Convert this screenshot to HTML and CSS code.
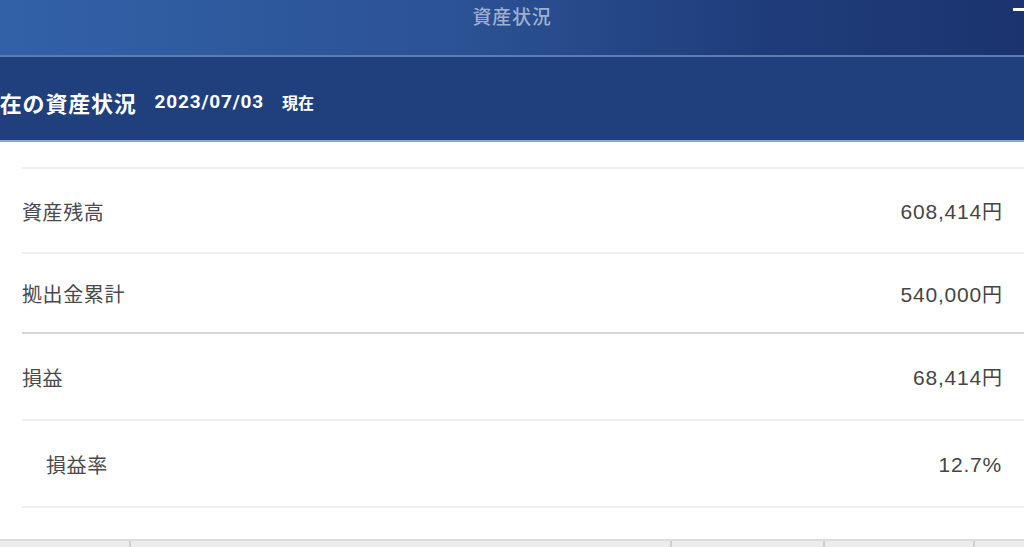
FILE: index.html
```html
<!DOCTYPE html>
<html lang="ja">
<head>
<meta charset="utf-8">
<title>資産状況</title>
<link rel="stylesheet" href="styles.css">
</head>
<body>
<div class="page">
  <header class="topbar">
    <h1 class="topbar-title">資産状況</h1>
    <span class="topbar-mark"></span>
  </header>
  <section class="summary-head">
    <h2 class="summary-title">現在の資産状況</h2>
    <span class="summary-date">2023/07/03</span>
    <span class="summary-now">現在</span>
  </section>
  <main class="content">
    <ul class="rows">
      <li class="row row-a"><span class="label">資産残高</span><span class="value">608,414<span class="yen">円</span></span></li>
      <li class="row row-b"><span class="label">拠出金累計</span><span class="value">540,000<span class="yen">円</span></span></li>
      <li class="row row-c"><span class="label">損益</span><span class="value">68,414<span class="yen">円</span></span></li>
      <li class="row row-d"><span class="label label-sub">損益率</span><span class="value">12.7%</span></li>
    </ul>
  </main>
  <footer class="tabbar">
    <div class="tab"></div>
    <div class="tab"></div>
    <div class="tab"></div>
    <div class="tab"></div>
    <div class="tab"></div>
  </footer>
</div>
</body>
</html>
```
FILE: styles.css
```css
* { box-sizing: border-box; }
html, body { margin: 0; padding: 0; }
body {
  width: 1024px;
  height: 547px;
  overflow: hidden;
  background: #ffffff;
  font-family: "Noto Sans CJK JP", "Noto Sans", sans-serif;
}
.page {
  display: flex;
  flex-direction: column;
  height: 547px;
  overflow: hidden;
}
.topbar {
  position: relative;
  height: 57px;
  flex: 0 0 57px;
  background: linear-gradient(90deg, #3261a8 0%, #2b5294 45%, #1f3c7a 75%, #1b346f 100%);
  border-bottom: 2px solid #5e7cb3;
  display: flex;
  justify-content: center;
}
.topbar-title {
  margin: 3px 0 0 0;
  font-size: 19px;
  line-height: 26px;
  font-weight: 500;
  color: #9fb0d0;
  letter-spacing: 0.8px;
}
.topbar-mark {
  position: absolute;
  right: 0;
  top: 8px;
  width: 11px;
  height: 3px;
  background: #ffffff;
}
.summary-head {
  flex: 0 0 85px;
  height: 85px;
  background: #1f3f7d;
  border-bottom: 2px solid #8ea6d6;
  display: flex;
  align-items: center;
  padding-top: 6px;
  color: #ffffff;
}
.summary-title {
  margin: 0 0 0 -23px;
  font-size: 22px;
  font-weight: 700;
  line-height: 30px;
  letter-spacing: 0.8px;
}
.summary-date {
  margin-left: 18px;
  font-family: "Roboto", "Liberation Sans", sans-serif;
  font-size: 19px;
  font-weight: 700;
  letter-spacing: 0.8px;
}
.summary-now {
  margin-left: 18px;
  font-size: 16px;
  font-weight: 700;
}
.content {
  flex: 1 1 auto;
  padding: 25px 0 0 22px;
}
.rows {
  list-style: none;
  margin: 0;
  padding: 0;
  border-top: 2px solid #f0f0f0;
}
.row {
  display: flex;
  align-items: center;
  justify-content: space-between;
  padding-right: 22px;
  border-bottom: 2px solid #f0f0f0;
  color: #4a4a4a;
}
.row-a { height: 85px; padding-top: 2px; }
.row-b { height: 80px; border-bottom: 2px solid #d6d6d6; padding-top: 2px; }
.row-c { height: 87px; padding-top: 2px; }
.row-d { height: 87px; padding-top: 2px; }
.label {
  font-size: 20px;
  line-height: 28px;
  letter-spacing: 0.6px;
}
.label-sub { margin-left: 24px; }
.value {
  font-family: "Liberation Sans", "Noto Sans CJK JP", sans-serif;
  font-size: 21px;
  line-height: 28px;
  letter-spacing: 0.8px;
  color: #454545;
}
.yen {
  font-family: "Noto Sans CJK JP", sans-serif;
  font-size: 20px;
  letter-spacing: 0;
}
.tabbar {
  flex: 0 0 auto;
  margin-top: auto;
  height: 8px;
  display: grid;
  grid-template-columns: 131px 541px 153px 150px 1fr;
  background: #ececec;
  border-top: 2px solid #dcdcdc;
}
.tab {
  border-right: 2px solid #cfcfcf;
}
.tab:last-child { border-right: none; }
```
